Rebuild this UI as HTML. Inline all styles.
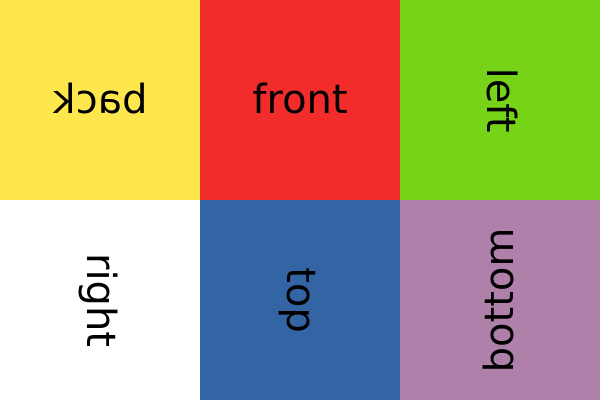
<!DOCTYPE html>
<html><head><style>
body{margin:0;width:600px;height:400px;overflow:hidden;font-family:"DejaVu Sans",sans-serif}
.c{position:absolute;width:200px;height:200px}
.t{position:absolute;left:0;top:0;width:200px;height:200px;display:flex;align-items:center;justify-content:center;font-size:40px;color:#000;line-height:1}
</style></head><body>
<div class="c" style="left:0;top:0;background:#fde74c"><div class="t" style="transform:scaleX(-1)">back</div></div>
<div class="c" style="left:200px;top:0;background:#f22b2b"><div class="t">front</div></div>
<div class="c" style="left:400px;top:0;background:#76d318"><div class="t" style="transform:rotate(90deg)">left</div></div>
<div class="c" style="left:0;top:200px;background:#fff"><div class="t" style="transform:rotate(90deg)">right</div></div>
<div class="c" style="left:200px;top:200px;background:#3365a5"><div class="t" style="transform:rotate(90deg)">top</div></div>
<div class="c" style="left:400px;top:200px;background:#ae80aa"><div class="t" style="transform:rotate(-90deg)">bottom</div></div>
</body></html>
